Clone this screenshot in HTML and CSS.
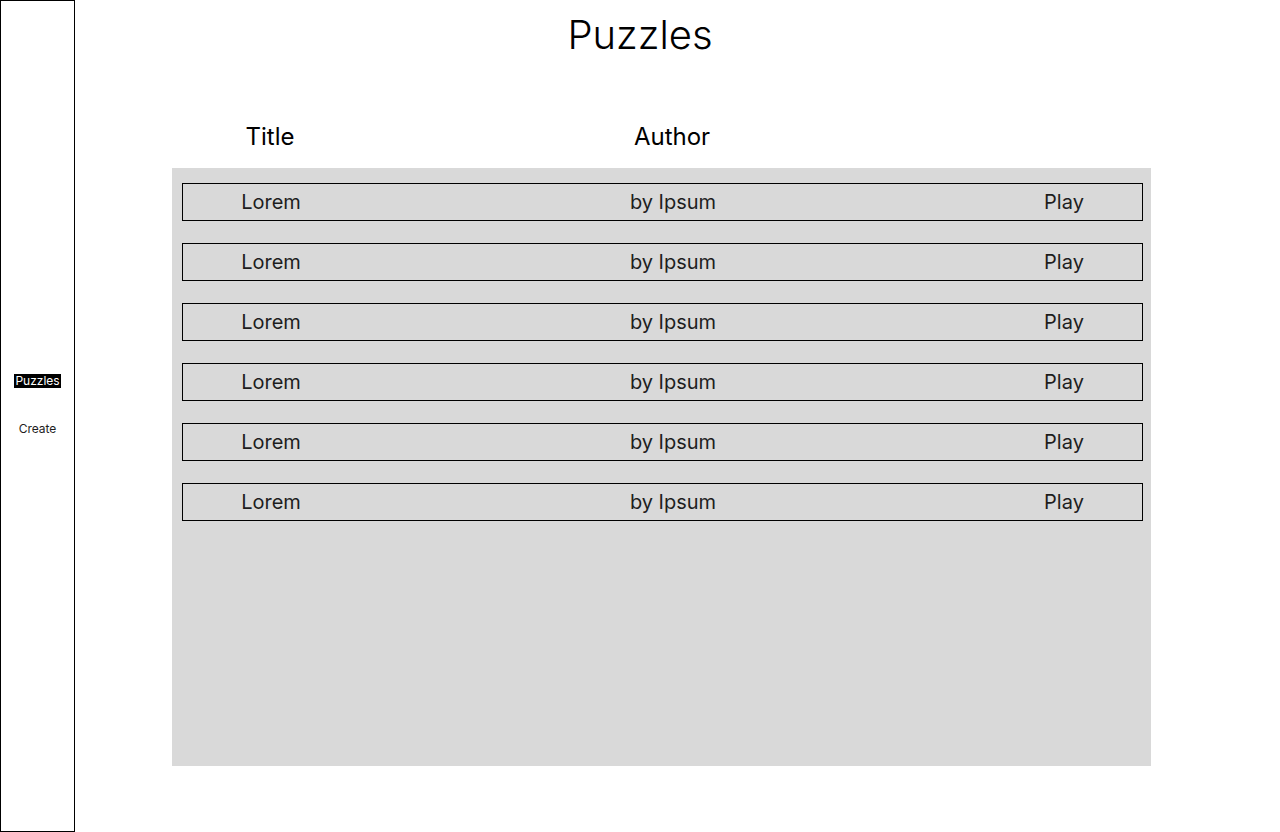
FILE: index.html
```html
<!DOCTYPE html>
<html>
<head>
<meta charset="utf-8">
<title>Puzzles</title>
<link rel="stylesheet" href="styles.css">
</head>
<body>
<div class="page">
  <nav class="sidebar">
    <span class="nav-item active">Puzzles</span>
    <span class="nav-item">Create</span>
  </nav>
  <main class="main">
    <h1 class="title">Puzzles</h1>
    <div class="columns">
      <span>Title</span>
      <span>Author</span>
      <span></span>
    </div>
    <div class="panel">
      <div class="row"><span>Lorem</span><span>by Ipsum</span><span>Play</span></div>
      <div class="row"><span>Lorem</span><span>by Ipsum</span><span>Play</span></div>
      <div class="row"><span>Lorem</span><span>by Ipsum</span><span>Play</span></div>
      <div class="row"><span>Lorem</span><span>by Ipsum</span><span>Play</span></div>
      <div class="row"><span>Lorem</span><span>by Ipsum</span><span>Play</span></div>
      <div class="row"><span>Lorem</span><span>by Ipsum</span><span>Play</span></div>
    </div>
  </main>
</div>
</body>
</html>
```
FILE: styles.css
```css
* { box-sizing: border-box; }
html, body { margin: 0; padding: 0; background: #fff; }
body { font-family: Inter, "Noto Sans", sans-serif; color: #000; }

.page { display: flex; width: 1280px; height: 832px; }

.sidebar {
  width: 75px;
  height: 832px;
  border: 1px solid #000;
  display: flex;
  flex-direction: column;
  align-items: center;
  justify-content: center;
  gap: 34px;
  padding-bottom: 22px;
  flex-shrink: 0;
}
.nav-item {
  font-size: 12px;
  line-height: 14px;
  color: #1e1e1e;
  padding: 0 1px;
}
.nav-item.active { background: #000; color: #fff; }

.main {
  flex: 1;
  padding-left: 97px;
}

.title {
  margin: 0;
  padding-top: 11px;
  margin-left: -97px;
  padding-right: 75px;
  text-align: center;
  font-size: 40px;
  line-height: 48px;
  font-weight: 300;
}

.columns {
  margin-top: 63px;
  margin-left: 10px;
  width: 960px;
  display: grid;
  grid-template-columns: 176px 628px 154px;
  text-align: center;
  font-size: 24px;
  line-height: 29px;
}

.panel {
  margin-top: 17px;
  width: 979px;
  height: 598px;
  background: #d9d9d9;
  padding: 15px 8px 0 10px;
  display: flex;
  flex-direction: column;
  gap: 22px;
}

.row {
  height: 38px;
  border: 1px solid #000;
  display: grid;
  grid-template-columns: 176px 628px 154px;
  align-items: center;
  text-align: center;
  font-size: 20px;
  line-height: 24px;
  color: #1e1e1e;
}
```
